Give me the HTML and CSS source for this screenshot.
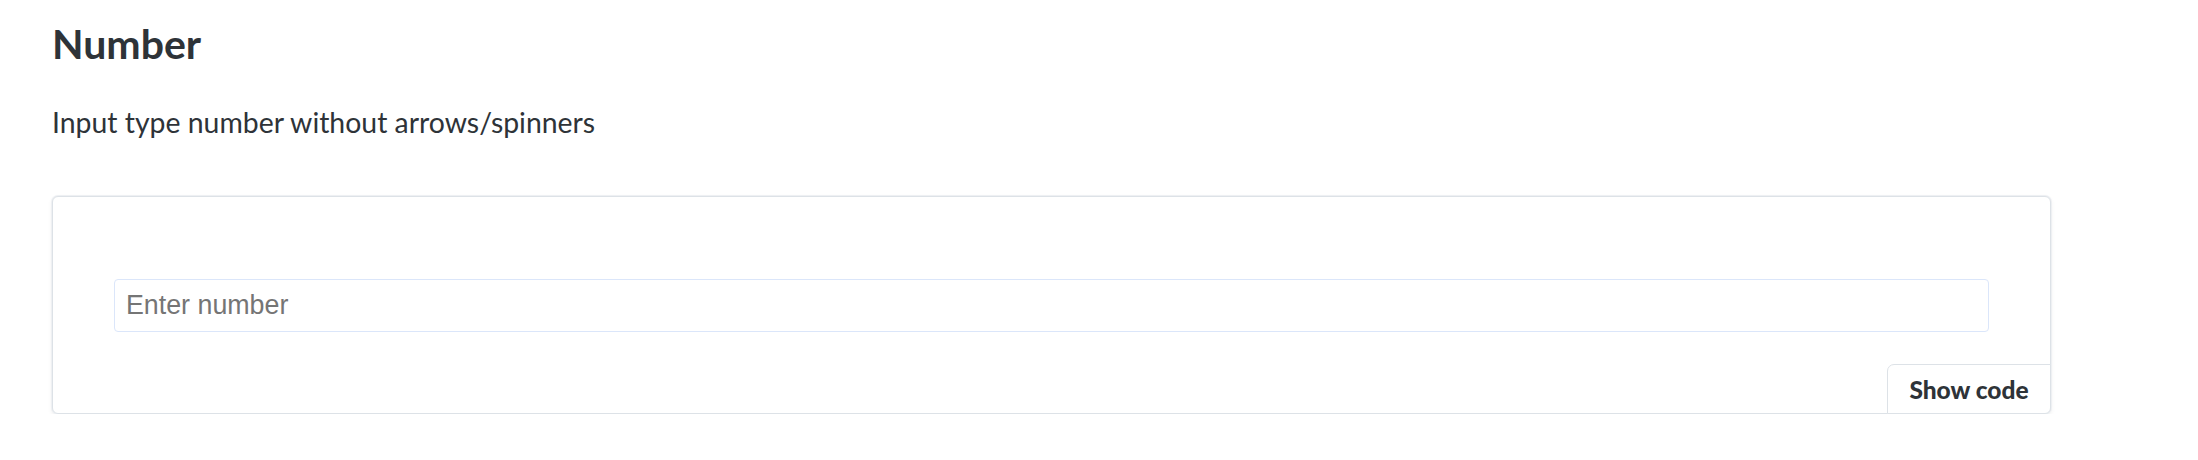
FILE: index.html
```html
<!DOCTYPE html>
<html lang="en">
<head>
<meta charset="utf-8">
<title>Number</title>
<link rel="stylesheet" href="styles.css">
</head>
<body>
<main class="page">
  <h2 class="title">Number</h2>
  <p class="lead">Input type number without arrows/spinners</p>
  <section class="example">
    <input class="num-input" type="number" placeholder="Enter number">
    <button class="show-code" type="button">Show code</button>
  </section>
</main>
</body>
</html>
```
FILE: styles.css
```css
* { box-sizing: border-box; }
html, body { margin: 0; padding: 0; background: #fff; }
body {
  font-family: Lato, "Open Sans", sans-serif;
  color: #2e3338;
}
.page {
  padding: 19px 0 0 52px;
  width: 2051px;
}
.title {
  margin: 0;
  font-size: 41px;
  font-weight: 700;
  line-height: 50px;
  letter-spacing: 0;
}
.lead {
  margin: 35px 0 0;
  font-size: 28.4px;
  line-height: 36px;
  font-weight: 400;
}
.example {
  position: relative;
  margin-top: 56px;
  border: 1px solid #dde2e7;
  border-radius: 6px;
  box-shadow: 0 0 0 1px #eef0f3, 0 2px 5px rgba(0,0,0,0.07);
  padding: 82px 61px 81px;
  background: #fff;
}
.num-input {
  display: block;
  width: 100%;
  height: 53px;
  border: 1px solid #dbe6fa;
  border-radius: 4px;
  padding: 0 11px;
  font-family: "Liberation Sans", Arial, sans-serif;
  font-size: 26.8px;
  color: #333;
  background: #fff;
  outline: none;
  -moz-appearance: textfield;
}
.num-input::-webkit-outer-spin-button,
.num-input::-webkit-inner-spin-button { -webkit-appearance: none; margin: 0; }
.num-input::placeholder { color: #757575; }
.show-code {
  position: absolute;
  right: -1px;
  bottom: -1px;
  width: 164px;
  height: 50px;
  border: 1px solid #dde2e7;
  border-radius: 7px 0 6px 0;
  background: #fff;
  font-family: Lato, "Open Sans", sans-serif;
  font-weight: 900;
  font-size: 24.5px;
  color: #2e3338;
  padding: 0;
  cursor: pointer;
}
```
